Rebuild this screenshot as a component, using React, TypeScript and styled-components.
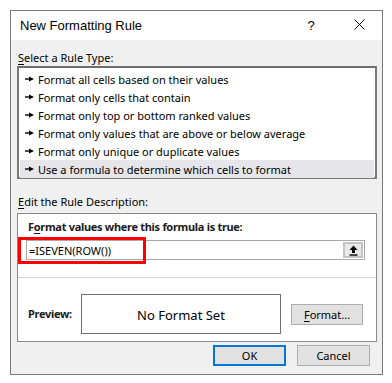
import React from 'react'
import styled, { createGlobalStyle } from 'styled-components'

const GlobalStyle = createGlobalStyle`
  html, body {
    margin: 0;
    padding: 0;
    background: #ffffff;
  }
  body {
    font-family: "Noto Sans", "Open Sans", sans-serif;
    color: #000000;
  }
`

const ruleTypes = [
  'Format all cells based on their values',
  'Format only cells that contain',
  'Format only top or bottom ranked values',
  'Format only values that are above or below average',
  'Format only unique or duplicate values',
  'Use a formula to determine which cells to format',
]

const Bullet = () => (
  <svg width="9" height="6" viewBox="0 0 9 6">
    <path d="M0 3 H5" stroke="#000" strokeWidth="1.4" />
    <path d="M4 0.5 L9 3 L4 5.5 Z" fill="#000" />
  </svg>
)

const CloseIcon = () => (
  <svg width="11" height="11" viewBox="0 0 11 11">
    <path d="M0.5 0.5 L10.5 10.5 M10.5 0.5 L0.5 10.5" stroke="#000" strokeWidth="1" />
  </svg>
)

const UploadIcon = () => (
  <svg width="9" height="11" viewBox="0 0 9 11">
    <path d="M4.5 0.5 L8.5 5 H6 V8 H3 V5 H0.5 Z" fill="#000" />
    <path d="M0.5 10 H8.5" stroke="#000" strokeWidth="1.4" />
  </svg>
)

export default function App() {
  return (
    <>
      <GlobalStyle />
      <Dialog>
        <TitleBar>
          <Title>New Formatting Rule</Title>
          <TitleButtons>
            <HelpMark>?</HelpMark>
            <CloseButton>
              <CloseIcon />
            </CloseButton>
          </TitleButtons>
        </TitleBar>

        <Body>
          <SectionLabel $top={10}>
            <u>S</u>elect a Rule Type:
          </SectionLabel>
          <RuleList>
            {ruleTypes.map((rule, i) => (
              <RuleItem key={rule} $selected={i === ruleTypes.length - 1}>
                <Bullet />
                <span>{rule}</span>
              </RuleItem>
            ))}
          </RuleList>

          <SectionLabel $top={15}>
            <u>E</u>dit the Rule Description:
          </SectionLabel>
          <DescriptionBox>
            <FormulaArea>
              <BoldLabel>
                F<u>o</u>rmat values where this formula is true:
              </BoldLabel>
              <FormulaField>
                <FormulaText>=ISEVEN(ROW())</FormulaText>
                <RefButton>
                  <UploadIcon />
                </RefButton>
                <Highlight />
              </FormulaField>
            </FormulaArea>
            <Divider />
            <PreviewRow>
              <PreviewLabel>Preview:</PreviewLabel>
              <PreviewBox>No Format Set</PreviewBox>
              <Button $width={72} $gap={10}>
                <u>F</u>ormat...
              </Button>
            </PreviewRow>
          </DescriptionBox>

          <Footer>
            <Button $width={73} $primary>
              OK
            </Button>
            <Button $width={73} $gap={11}>
              Cancel
            </Button>
          </Footer>
        </Body>
      </Dialog>
    </>
  )
}

const Dialog = styled.div`
  box-sizing: border-box;
  margin: 10px 0 0 10px;
  width: 373px;
  height: 365px;
  border: 1px solid #7a7a7a;
  background: #f0f0f0;
  display: flex;
  flex-direction: column;
`

const TitleBar = styled.div`
  height: 29px;
  background: #ffffff;
  display: flex;
  align-items: center;
  justify-content: space-between;
  padding-left: 9px;
`

const Title = styled.div`
  font-family: "Liberation Sans", Arial, sans-serif;
  font-size: 13px;
  color: #000;
  padding-bottom: 1px;
`

const TitleButtons = styled.div`
  display: flex;
  align-items: center;
  height: 100%;
`

const HelpMark = styled.div`
  width: 46px;
  text-align: center;
  font-family: "Liberation Sans", Arial, sans-serif;
  font-size: 13px;
  padding-right: 2px;
`

const CloseButton = styled.div`
  width: 46px;
  display: flex;
  justify-content: center;
  align-items: center;
  padding-bottom: 2px;
`

const Body = styled.div`
  padding: 0 6px;
  display: flex;
  flex-direction: column;
`

const SectionLabel = styled.div<{ $top: number }>`
  font-size: 11px;
  line-height: 16px;
  height: 16px;
  margin-top: ${(p) => p.$top}px;
  padding-left: 1px;

  u {
    text-decoration-thickness: 1px;
    text-underline-offset: 2px;
  }
`

const RuleList = styled.div`
  box-sizing: border-box;
  width: 360px;
  height: 113px;
  border: 2px solid #7a7a7a;
  border-top-color: #6e6e6e;
  background: #ffffff;
  padding: 2px 1px;
  display: flex;
  flex-direction: column;
`

const RuleItem = styled.div<{ $selected?: boolean }>`
  height: 18px;
  flex: none;
  display: flex;
  align-items: center;
  gap: 4px;
  padding-left: 5px;
  font-size: 11px;
  background: ${(p) => (p.$selected ? '#e5e5ea' : 'transparent')};

  svg {
    flex: none;
  }
`

const DescriptionBox = styled.div`
  box-sizing: border-box;
  margin-top: 3px;
  width: 360px;
  height: 129px;
  border: 1px solid #8a8a8a;
  background: #ffffff;
  display: flex;
  flex-direction: column;
`

const FormulaArea = styled.div`
  box-sizing: border-box;
  height: 63px;
  padding: 5px 10px 0 8px;
`

const BoldLabel = styled.div`
  font-size: 11px;
  font-weight: 700;
  line-height: 16px;
  letter-spacing: -0.3px;
  padding-left: 2px;
  white-space: nowrap;
  color: #1a1a1a;

  u {
    text-decoration-thickness: 1px;
    text-underline-offset: 2px;
  }
`

const FormulaField = styled.div`
  position: relative;
  box-sizing: border-box;
  margin-top: 5px;
  width: 339px;
  height: 20px;
  border: 1px solid #a8a8a8;
  display: flex;
  align-items: center;
  justify-content: space-between;
  padding: 0 1px 0 2px;
`

const FormulaText = styled.span`
  font-size: 11px;
`

const RefButton = styled.div`
  box-sizing: border-box;
  width: 20px;
  height: 16px;
  background: #e9e9e9;
  border: 2px solid #c4c4c4;
  display: flex;
  align-items: center;
  justify-content: center;
`

const Highlight = styled.div`
  position: absolute;
  left: -9px;
  top: -4px;
  width: 128px;
  height: 27px;
  box-sizing: border-box;
  border: 3px solid #ff0000;
  pointer-events: none;
`

const Divider = styled.div`
  height: 1px;
  background: #d4d4d4;
`

const PreviewRow = styled.div`
  display: flex;
  align-items: center;
  padding: 16px 0 0 10px;
`

const PreviewLabel = styled(BoldLabel)`
  width: 53px;
  padding-left: 0;
`

const PreviewBox = styled.div`
  box-sizing: border-box;
  width: 200px;
  height: 40px;
  border: 1px solid #6f6f6f;
  background: #ffffff;
  display: flex;
  align-items: center;
  justify-content: center;
  font-size: 13px;
  padding-top: 1px;
`

const Button = styled.div<{ $width: number; $gap?: number; $primary?: boolean }>`
  box-sizing: border-box;
  width: ${(p) => p.$width}px;
  height: 21px;
  margin-left: ${(p) => p.$gap ?? 0}px;
  background: #e1e1e1;
  border: ${(p) => (p.$primary ? '2px solid #0078d7' : '1px solid #adadad')};
  display: flex;
  align-items: center;
  justify-content: center;
  font-size: 11px;

  u {
    text-decoration-thickness: 1px;
    text-underline-offset: 2px;
  }
`

const Footer = styled.div`
  display: flex;
  justify-content: flex-end;
  margin-top: 3px;
  padding-right: 6px;
`
